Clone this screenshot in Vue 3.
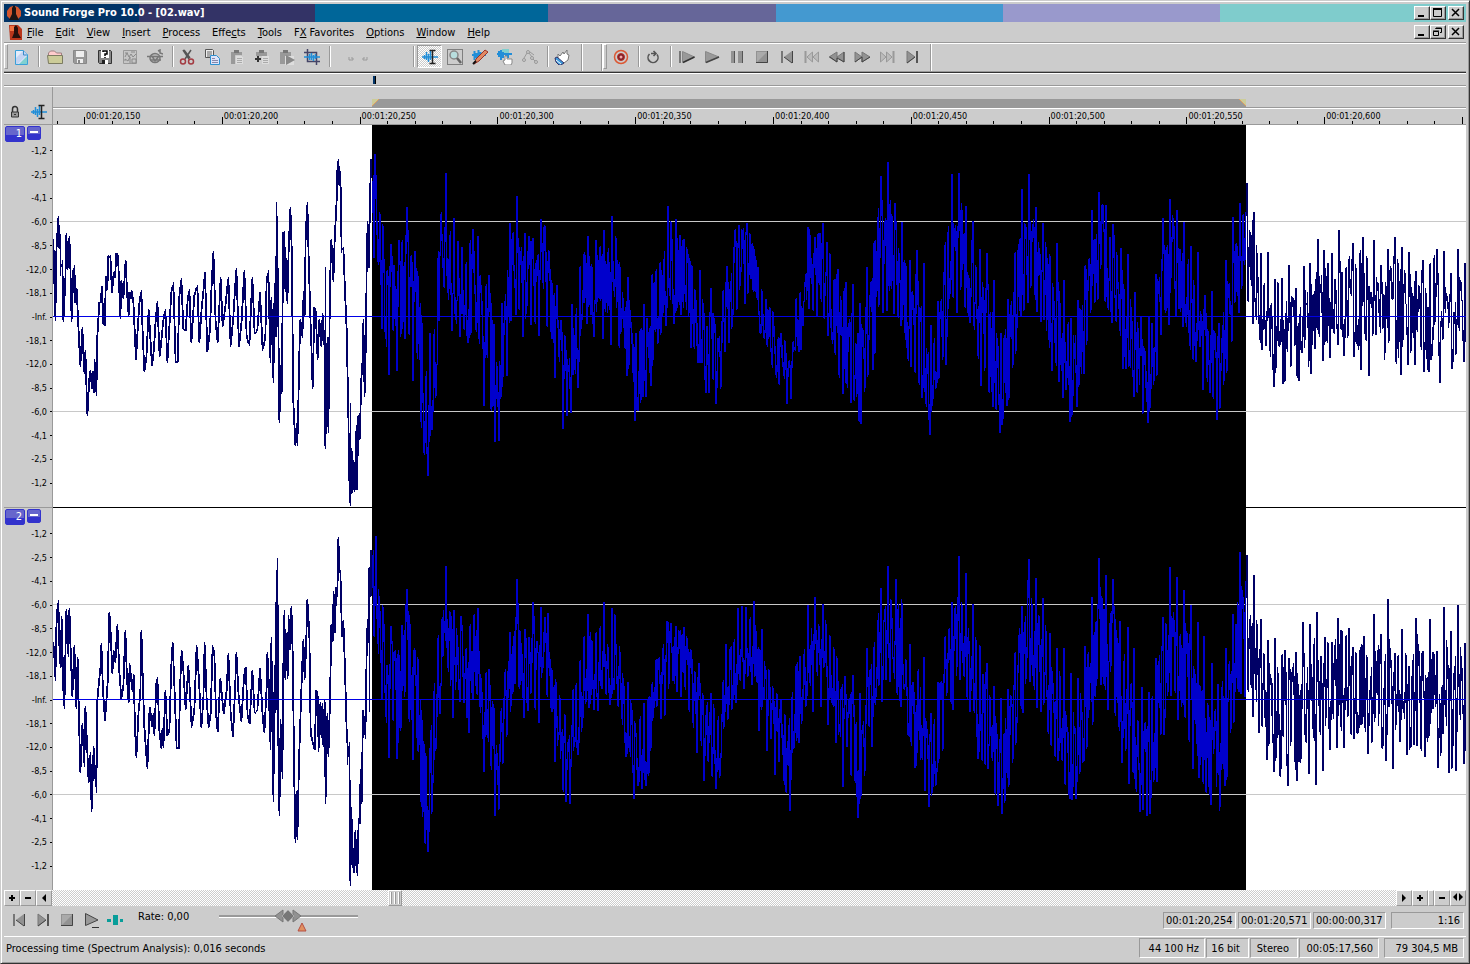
<script setup>
import { ref } from 'vue'

const menus = [
  ['', 'F', 'ile'], ['', 'E', 'dit'], ['', 'V', 'iew'], ['', 'I', 'nsert'], ['', 'P', 'rocess'],
  ['Effe', 'c', 'ts'], ['', 'T', 'ools'], ['F', 'X', ' Favorites'], ['', 'O', 'ptions'], ['', 'W', 'indow'], ['', 'H', 'elp']
]

const icon = {
  new: '<path d="M2.500 1.500h8l4 4v10h-12z" fill="#e4ecfa" stroke="#3aa0d8"/><path d="M3 9l7-7h1l3 3v1l-9 9H3z" fill="#c3d4f2"/><path d="M6 15l8-8v8z" fill="#7fd0d0"/><path d="M10.500 2v4H14" fill="none" stroke="#3a8cc8"/>',
  open: '<path d="M1.500 14V4l2-2h4l2 2h5v3" fill="#ffcccc" stroke="#a08080"/><path d="M.5 6.500h15v8h-14z" fill="#cccc99" stroke="#7c7c62"/>',
  save: '<path d="M1.500 1.500h12l1 1v12h-12l-1-1z" fill="#999" stroke="#888"/><path d="M4 2h8v6H4zM5 10h6v4H5z" fill="#eee"/><path d="M6 11h2v3H6z" fill="#888"/>',
  saveAs: '<path d="M1.500 1.500h12l1 1v12h-12l-1-1z" fill="#888" stroke="#333"/><path d="M4 1h8v8H4zM5 11h6v4H5z" fill="#fff"/><path d="M6 3V2h4v3H8v2M8 8v1" fill="none" stroke="#000" stroke-width="1.500"/><path d="M5 11h3v4H5z" fill="#222"/>',
  render: '<path d="M1.500 1.500h13v13h-13z" fill="#c6c6c6" stroke="#999"/><path d="M3 8l2-4 2 4 2-3 2 3 3-3M3 12v-2l3 2 2-4v6M10 14v-4h4v4zM3 4h3M9 3h4" fill="none" stroke="#8a8a8a"/>',
  publish: '<ellipse cx="8" cy="9" rx="5" ry="4.500" fill="#bbb" stroke="#777" stroke-width="1.500"/><path d="M0 7.500h16M3 11h11M11 2l2-1v3l3 1M5 7l3 5 4-5" fill="none" stroke="#777" stroke-width="1.500"/>',
  cut: '<path d="M4 1l6 9M12 1L6 10M5 1l6 8" fill="none" stroke="#555" stroke-width="1.500"/><circle cx="4" cy="12.500" r="2.500" fill="none" stroke="#a33b42" stroke-width="1.500"/><circle cx="12" cy="12.500" r="2.500" fill="none" stroke="#a33b42" stroke-width="1.500"/>',
  copy: '<path d="M1.500.5h7l1 1v7h-8z" fill="#eee" stroke="#555"/><path d="M3 3h5M3 5h5M3 7h3" stroke="#666"/><path d="M6.500 6.500h6l3 3v6h-9z" fill="#dde4fa" stroke="#2f90d0"/><path d="M8 9.500h3M8 11.500h6M8 13.500h6" stroke="#88a"/>',
  paste: '<path d="M2 3h11v12H2z" fill="#999"/><path d="M5 1h5v3H5z" fill="#777"/><path d="M6.500 6.500h6l2 2v7h-8z" fill="#ddd" stroke="#ccc"/><path d="M8 9.500h5M8 11.500h5M8 13.500h5" stroke="#aaa"/>',
  mix: '<path d="M2 3h11v10H2z" fill="#999"/><path d="M5 1h5v3H5z" fill="#777"/><path d="M8 7h7v8H8z" fill="#ddd"/><path d="M9 9.500h5M9 11.500h5M9 13.500h5" stroke="#aaa"/><path d="M0 7h8v6H0z" fill="#ccc"/><path d="M1 10h6M4 7v6" stroke="#333" stroke-width="2"/>',
  pastePlay: '<path d="M1 3h11v12H1z" fill="#999"/><path d="M4 1h5v3H4z" fill="#777"/><path d="M6 7h9v9H6z" fill="#ddd"/><path d="M7 6l9 5-9 5z" fill="#888"/>',
  crop: '<path d="M3.500 0v12.500H16M0 3.500h12.500V16" fill="none" stroke="#446" stroke-width="1.500"/><path d="M0 8h16M5.500 5v6M7.500 4v7M9.500 6v6M11.500 5v5" stroke="#218ed8" stroke-width="1.500"/>',
  edit: '<path d="M0 8h16M2.500 6v4M4.500 3v8M6.500 5v8M8.500 2v9" stroke="#218ed8" stroke-width="1.500"/><path d="M7.500 1.500h6M7.500 14.500h6M10.500 1.500v13" stroke="#222" stroke-width="1.500"/>',
  zoom: '<path d="M.5.5h15v15H.5z" fill="none" stroke="#333" stroke-dasharray="1 1"/><circle cx="7" cy="6" r="4" fill="#b8dede" stroke="#888" stroke-width="1.500"/><path d="M10 9l4 5" stroke="#666" stroke-width="2.500"/>',
  pencil: '<path d="M0 6h14M2.500 2v9M4.500 4v5M6.500 1v9M8.500 3v7" stroke="#218ed8" stroke-width="2"/><path d="M2 15l2-5 9-9 3 2-9 9z" fill="#e08a65" stroke="#9b3328"/><path d="M1 15l3-3" stroke="#111" stroke-width="2"/>',
  event: '<path d="M5 0h7v6H5z" fill="#7fcfcf"/><path d="M0 5h15M2 2v6M4 1v10M6 3v6M9 5v4M11 4v5" stroke="#218ed8" stroke-width="2"/><path d="M8 16l-2-4 2-1V7h2v3h5v4l-1 2z" fill="#fff" stroke="#888"/>',
  envelope: '<g fill="none" stroke="#999"><circle cx="2" cy="11" r="1.500"/><circle cx="6" cy="3" r="1.500"/><circle cx="10" cy="9" r="1.500"/><circle cx="14" cy="13" r="1.500"/><path d="M2 9l3-5M7 4l3 4M11 10l2 2M8 3l4 3"/></g>',
  hand: '<path d="M4 9V5l2 2 3-4 1 2 3-4v4l2 1-1 5-4 3H6z" fill="#fff" stroke="#777"/><path d="M1 9l2-1 7 6-3 2H5L2 13z" fill="#3e9adc" stroke="#336"/><path d="M2 11l5 4" stroke="#fff"/>',
  record: '<circle cx="8" cy="8" r="6.500" fill="none" stroke="#dc5833" stroke-width="1.500"/><circle cx="8" cy="8" r="3.500" fill="#7e2028" stroke="#b82f25"/><circle cx="8" cy="8" r="1.500" fill="#f5a6a6"/>',
  loop: '<path d="M4.500 5A5 5 0 1 0 12 5.500M6 4.500h5M8.500 2l2.500 2.500L8.500 7" fill="none" stroke="#555" stroke-width="1.600"/>',
  playAll: '<path d="M1 2v12" stroke="#777" stroke-width="2"/><path d="M3.500 2.500l12 5.500-12 5.500z" fill="#999" stroke="#888"/><path d="M4 13.500L15.500 8" stroke="#333" stroke-width="1.500"/>',
  play: '<path d="M1.500 2.500L15 8 1.500 13.500z" fill="#999" stroke="#888"/><path d="M2 13.500L15 8" stroke="#444" stroke-width="1.500"/>',
  pause: '<path d="M2 2h4v12H2zM9 2h5v12H9z" fill="#929292"/><path d="M5.500 2v12M13.500 2v12" stroke="#555"/>',
  stop: '<path d="M2 2h12v12H2z" fill="#929292"/><path d="M13.500 2v11.500H2" fill="none" stroke="#444"/><path d="M3 13V3h10z" fill="#aaa"/>',
  first: '<path d="M3 2v12" stroke="#777" stroke-width="2"/><path d="M13 2v12L5 8z" fill="#929292"/><path d="M13.500 2v12M5 8l8 6" fill="none" stroke="#444"/>',
  prev: '<path d="M1.500 2v12" stroke="#999" stroke-width="2"/><path d="M8.500 3v10L3 8zM14.500 3v10L9 8z" fill="#bbb" stroke="#999"/>',
  rewind: '<path d="M8 3v10L0 8zM15 3v10L8 8z" fill="#929292" stroke="#777"/><path d="M1 8l7 5V9l7 4V3" fill="none" stroke="#444"/>',
  forward: '<path d="M1 3v10l7-5zM8 3v10l8-5z" fill="#929292" stroke="#777"/><path d="M1 13l7-5v5l8-5" fill="none" stroke="#444"/>',
  next: '<path d="M14.500 2v12" stroke="#999" stroke-width="2"/><path d="M1.500 3v10L7 8zM7.500 3v10L13 8z" fill="#bbb" stroke="#999"/>',
  last: '<path d="M13 2v12" stroke="#555" stroke-width="2"/><path d="M3 2v12l8-6z" fill="#929292" stroke="#777"/><path d="M3 14l8-6" stroke="#444"/>',
  playLine: '<path d="M2.500 1.500L15 8 2.500 13.500z" fill="#999" stroke="#444"/><path d="M9 15.500h7" stroke="#333"/>',
  scrub: '<path d="M6 3h5v10H6zM0 7h4v3H0zM13 7h3v3h-3z" fill="#089d99"/>',
  lock: '<path d="M5.500 8V5a2.500 2.500 0 0 1 5 0v3" fill="none" stroke="#333" stroke-width="1.500"/><path d="M4.500 8h7v5h-7z" fill="#999" stroke="#333"/><path d="M7 10h2v1H7z" fill="#333"/>'
}
const fileTools = [['open', 'Open'], ['save', 'Save'], ['saveAs', 'Save As'], ['render', 'Render As'], ['publish', 'Publish']]
const clipTools = [['cut', 'Cut'], ['copy', 'Copy'], ['paste', 'Paste'], ['mix', 'Mix'], ['pastePlay', 'Paste and Play'], ['crop', 'Trim']]
const editTools = [['edit', 'Edit tool'], ['zoom', 'Magnify tool'], ['pencil', 'Pencil tool'], ['event', 'Event tool'], ['envelope', 'Envelope tool']]
const transport = [['playAll', 'Play All'], ['play', 'Play'], ['pause', 'Pause'], ['stop', 'Stop'], ['first', 'Go to Start'], ['prev', 'Previous'], ['rewind', 'Rewind'], ['forward', 'Forward'], ['next', 'Next'], ['last', 'Go to End']]
const bottomTools = [['first', 'Go to Start'], ['last', 'Go to End'], ['stop', 'Stop'], ['playLine', 'Play Normal'], ['scrub', 'Scrub']]
const activeTool = ref('edit')
const rate = ref(50)

const times = ['150', '200', '250', '300', '350', '400', '450', '500', '550', '600'].map(t => '00:01:20,' + t)
const decibels = ['-1,2', '-2,5', '-4,1', '-6,0', '-8,5', '-12,0', '-18,1', '-Inf.', '-18,1', '-12,0', '-8,5', '-6,0', '-4,1', '-2,5', '-1,2']
const position = ['00:01:20,254', '00:01:20,571', '00:00:00,317']

const parse = (text, x0, sx, y0, sy) => text.trim().split(/\s+/).map(p => {
  const [x, y] = p.split(',').map(Number)
  return [x0 + x / sx, y0 + y / sy]
})

function level(list, x) {
  let i = 1
  while (i < list.length - 1 && list[i][0] < x) i++
  const [ax, ay] = list[i - 1]
  const [bx, by] = list[i]
  return bx === ax ? by : ay + (by - ay) * Math.max(0, Math.min(1, (x - ax) / (bx - ax)))
}

// One vertical bar for every column that a plain line passes through.
function lineBars(points) {
  let d = ''
  for (let x = 53; x < 372; x++) {
    const a = x - 0.4
    const b = x + 1.4
    const ys = [level(points, a), level(points, b), ...points.filter(p => p[0] >= x && p[0] <= x + 1).map(p => p[1])]
    const top = Math.round(Math.min(...ys))
    d += `M${x}.5 ${top}V${Math.max(top + 2, Math.round(Math.max(...ys)))}`
  }
  return d
}

// Dense oscillation between an upper and a lower series of extremes.
function denseBars(tops, bottoms, from, to, seed) {
  const high = new Map(tops.map(p => [Math.floor(p[0]), p[1]]))
  const low = new Map(bottoms.map(p => [Math.floor(p[0]), p[1]]))
  let state = seed
  const random = () => {
    state = (state * 1103515245 + 12345) % 2147483648
    return state / 2147483648
  }
  let last = null
  let d = ''
  for (let x = from; x < to; x++) {
    const u = level(tops, x)
    const l = level(bottoms, x)
    const r = random()
    const f = x % 2 ? 0.12 + r * 0.35 : 0.88 - r * 0.35
    const y = high.get(x) ?? low.get(x) ?? u + (l - u) * f
    if (last === null) last = y + 20
    const reach = (l - u) * 0.2
    const a = Math.min(y, last)
    const b = Math.max(y, last)
    const top = Math.round(Math.min(a, Math.max(u, a - random() * reach)))
    const bottom = Math.round(Math.max(b, Math.min(l, b + random() * reach)))
    d += `M${x}.5 ${top}V${Math.max(bottom, top + 2)}`
    last = y
  }
  return d
}

const left1 = parse(`160,357 163,485 166,604 169,397 175,288 178,388 181,343 182,467 187,420 190,605 196,485 199,340 203,450 206,408 208,347 211,440 215,605 220,450 223,435 226,550 230,505 234,597 241,740 247,622 250,697 253,762 256,690 262,887 268,777 271,750 276,807 279,752 282,820 284,717 289,827 292,650 298,545 302,548 306,497 310,612 314,617 318,467 322,510 325,408 331,405 336,520 341,457 345,475 349,399 354,405 361,597 364,480 370,537 377,420 381,515 386,588 388,515 392,538 395,510 400,545 408,720 413,628 418,550 424,510 428,640 433,755 439,715 446,567 456,738 462,685 466,615 472,543 479,712 490,600 496,567 502,728 508,622 514,517 520,487 527,730 533,725 538,530 544,475 550,627 557,632 563,540 568,507 574,670 583,527 592,495 598,668 605,565 610,515 615,457 622,697 630,630 634,515 640,393 647,610 653,668 658,560 662,472 668,622 676,560 685,471 692,680 700,590 709,445 717,680 725,600 733,450 740,650 748,677 757,471 764,643 772,630 780,517 788,692 796,650 800,480 805,450 811,728 814,532 820,788 824,490 828,650 830,247 835,600 838,910 842,735 845,822 850,335 853,333 856,515 859,415 862,552 866,388 871,261 875,385 880,845 886,977 890,910 892,977 895,850 898,700 901,597 907,655 911,513 914,590 917,345 922,247 926,415 931,590 934,672 938,808 943,560 947,575 953,720 958,598 964,682 968,580 974,690 976,440 976,988 982,650 985,940 990,490 994,357 1000,485 1004,360 1010,240 1012,152 1015,117 1018,197 1021,152 1025,400 1030,380 1035,515 1040,630 1045,880 1048,1100 1051,850 1051,1157 1055,985 1058,1120 1061,1020 1064,1115 1069,915 1071,1110 1075,885 1079,960 1084,775 1087,740 1090,597 1094,832 1098,640 1100,437 1103,303 1107,443 1110,220 1114,117`, 0, 3, 120, 3)

const left2 = parse(`160,425 163,470 166,542 169,385 173,312 175,300 178,435 182,505 185,348 190,570 193,627 197,423 199,327 205,472 208,324 212,450 217,592 223,435 229,628 233,470 237,662 241,820 247,670 253,800 256,618 262,755 266,850 271,757 275,935 281,738 285,820 289,880 292,600 298,535 302,495 304,430 309,575 315,662 320,590 323,545 328,336 332,400 337,523 341,450 346,490 352,372 358,515 364,597 370,560 376,390 381,540 386,608 389,488 394,545 398,575 401,523 405,685 409,773 416,630 421,580 424,390 429,560 433,680 442,808 448,640 450,620 456,680 460,640 463,708 469,550 472,531 478,690 484,748 487,685 490,745 496,570 502,707 508,695 514,495 518,426 524,580 530,745 536,748 541,540 545,450 550,510 557,630 565,495 570,580 575,683 583,630 590,435 596,525 604,683 610,600 614,426 620,600 626,683 632,640 638,435 643,460 648,640 653,697 661,535 671,643 680,570 685,460 692,640 699,710 706,545 709,457 716,590 724,667 732,530 737,500 743,650 749,673 757,510 764,640 772,632 780,505 788,650 793,700 800,560 802,457 806,540 811,750 814,411 818,768 820,905 824,495 827,640 829,317 832,174 836,878 838,948 842,657 847,838 851,400 853,330 856,540 860,400 863,538 866,345 870,450 874,318 878,460 883,850 886,1028 889,873 892,1020 897,785 903,600 908,460 910,418 914,540 918,450 922,297 928,400 932,700 940,735 944,750 949,570 953,590 956,755 961,605 964,713 967,608 970,742 974,600 977,913 982,640 985,770 990,600 994,372 998,425 1001,272 1005,400 1008,262 1012,290 1015,111 1018,210 1021,210 1026,410 1030,360 1035,510 1040,695 1045,770 1048,1142 1048,726 1051,1157 1054,920 1058,1105 1060,1045 1062,1120 1066,990 1069,1095 1072,1127 1076,955 1079,972 1082,808 1085,912 1089,630 1093,670 1096,717 1100,455 1103,357 1105,430 1108,637 1108,200 1112,292 1114,150`, 0, 3, 500, 3)

const midTops1 = [
  ...parse(`7,183 14,101 28,282 38,318 49,465 61,372 71,441 85,360 95,366 109,261 120,408 132,393 143,467 155,610 166,773 179,640 191,642 202,413 212,282 226,159 237,345 250,294 261,363 274,381 286,438 298,369 307,327 322,348 332,495 346,498 355,465 369,612 380,753 394,549 403,543 417,309 428,345 440,228 450,393 463,339 475,348 487,354 498,420 511,297 523,318 535,393 545,490 559,495 570,600 583,648 594,738 605,552 616,585 629,440 641,402 653,348 665,447 677,360 689,384 701,330 711,396 725,288 737,354 749,441 758,537 773,471 782,606 796,640 809,633 820,552 830,603 844,465 855,453 868,429 880,417 892,258 901,306 916,297 927,345 940,357 950,387 964,438 974,513 988,450 997,549 1010,630 1021,504 1034,612 1045,657 1058,513 1069,438 1081,483 1093,330 1104,315 1116,330 1129,309 1139,342 1151,387 1162,441 1174,513 1185,537 1198,564 1208,576 1221,657 1232,639 1243,663 1255,730 1268,666 1276,537 1288,519 1303,486`, 370, 3, 120, 3),
  ...parse(`22,321 43,351 53,342 67,309 78,366 88,402 100,483 111,447 122,546 135,486 145,621 156,492 166,690 178,549 188,642 199,441 211,490 221,369 232,291 241,168 253,315 262,126 274,297 284,249 296,411 305,306 316,441 328,420 338,537 349,390 360,564 370,429 380,711 391,615 400,675 412,543 422,543 433,375 443,336 453,162 463,345 475,159 485,270 496,258 505,477 517,303 526,450 538,387 548,510 559,399 569,585 580,480 590,654 601,639 611,657 622,537 632,558 643,399 653,390 664,207 674,327 685,162 696,312 706,261 716,393 727,309 737,381 749,408 758,513 770,369 779,555 791,480 801,612 811,594 823,672 833,540 844,573 853,438 865,417 875,270 886,366 896,216 908,255 917,255 928,360 938,312 950,405 961,384 971,518 981,402 992,567 1003,516 1013,627 1022,590 1034,702 1045,590 1055,612 1066,462 1076,490 1087,294 1097,396 1108,237 1118,297 1129,270 1139,393 1150,306 1161,432 1171,378 1181,507 1191,396 1201,594 1213,525 1223,633 1233,513 1243,645 1255,609 1267,615 1275,420 1286,504 1297,291 1307,381 1318,249 1327,285 1337,276`, 800, 3, 120, 3)
]
const midBottoms1 = [
  ...parse(`10,413 22,425 34,627 45,657 56,765 67,617 80,753 91,640 104,657 115,640 127,783 138,700 151,905 161,998 172,1067 183,930 196,827 206,603 219,500 231,520 244,632 255,600 268,650 280,624 292,668 302,640 316,630 326,657 340,857 350,700 362,866 374,965 386,963 398,770 410,767 421,603 435,585 446,563 458,651 467,580 481,615 493,605 505,647 516,490 529,617 541,635 553,773 565,705 577,927 588,887 600,880 612,750 622,803 635,600 648,613 660,585 671,650 685,525 697,657 708,550 721,674 729,513 745,677 756,720 769,767 781,720 793,903 803,873 816,830 825,830 840,797 848,720 862,668 872,640 885,617 898,525 910,612 920,563 932,585 945,545 961,683 970,680 983,728 994,728 1005,820 1016,818 1028,770 1037,852 1052,801 1062,696 1075,668 1085,620 1099,567 1109,495 1122,551 1132,518 1146,510 1158,533 1168,640 1180,653 1190,675 1203,735 1215,765 1222,806 1240,765 1250,851 1261,837 1272,690 1285,697 1291,690`, 370, 3, 120, 3),
  ...parse(`12,573 26,567 38,570 48,588 61,533 71,593 83,648 93,660 104,700 115,765 127,821 138,791 151,850 161,837 175,903 181,911 194,803 203,765 217,750 223,700 235,549 247,579 260,573 271,490 281,582 292,588 302,617 312,640 322,717 332,741 344,755 356,790 365,833 377,851 387,944 395,857 406,803 416,773 428,708 436,735 448,520 458,530 470,580 482,497 494,560 502,580 509,608 520,617 533,708 542,797 554,743 566,815 576,860 587,867 598,938 605,914 618,857 626,833 637,735 647,692 660,588 670,570 681,549 692,495 702,525 710,575 722,605 731,600 744,660 755,753 765,730 776,785 787,833 797,803 809,905 815,884 828,860 836,795 850,762 859,663 871,570 884,545 893,537 901,435 914,543 922,563 935,608 947,602 958,633 967,747 977,747 989,735 999,831 1010,812 1020,893 1028,877 1042,908 1049,863 1061,783 1070,765 1082,645 1092,570 1106,615 1112,473 1126,588 1136,563 1148,620 1155,608 1167,677 1176,717 1187,725 1198,675 1208,809 1218,773 1229,818 1238,831 1250,899 1259,863 1271,783 1280,753 1294,663 1304,543 1316,580 1324,497 1336,490`, 800, 3, 120, 3)
]
const midTops2 = parse(`4,165 9,107 15,288 23,320 30,497 37,377 44,452 57,375 65,266 71,372 79,450 85,478 92,660 99,777 107,690 113,573 120,413 127,357 135,197 141,338 149,330 155,405 162,348 170,456 177,377 184,345 192,324 197,535 206,518 212,507 220,624 226,765 233,632 240,516 248,395 255,407 261,237 267,393 275,387 283,417 290,307 297,432 304,320 311,351 317,338 324,510 331,545 338,593 346,645 353,720 360,570 366,555 374,483 381,410 388,342 395,426 402,399 409,384 416,305 423,447 430,324 436,345 445,455 450,535 459,546 464,608 472,668 480,657 487,610 494,597 502,552 508,480 514,474 521,444 529,363 536,369 544,378 550,393 558,381 564,413 571,450 578,520 585,490 592,585 599,615 606,578 613,624 619,663 628,545 634,432 642,441 648,426 655,324 662,318 670,320 676,360 683,303 690,455 697,387 703,497 711,510 717,563 725,582 731,597 738,645 745,675 751,590 758,497 765,468 772,462 780,315 792,291 799,381 806,312 812,372 819,407 826,447 832,474 838,567 846,528 852,603 859,525 865,682 872,578 878,680 885,444 891,507 897,440 904,360 910,264 917,338 922,197 928,303 936,237 948,309 954,490 961,432 966,550 975,513 986,471 991,700 998,640 1004,677 1011,545 1017,545 1024,411 1030,387 1036,305 1042,330 1048,167 1054,330 1061,219 1067,430 1073,312 1079,420 1086,438 1091,530 1098,489 1104,597 1111,558 1117,708 1123,593 1129,705 1136,567 1142,590 1149,459 1155,405 1161,318 1166,372 1173,177 1179,320 1186,234 1191,360 1198,294 1204,393 1211,399 1217,550 1223,444 1229,530 1236,443 1242,682 1248,520 1255,690 1261,534 1267,600 1273,438 1279,468 1286,290 1293,378 1298,174 1304,297 1311,225 1317,372 1323,237 1329,393 1336,363 1342,485 1349,381 1355,573 1361,443 1367,665 1374,561 1380,683 1387,576 1393,597 1399,474 1405,483 1412,351 1418,375 1424,201 1430,353 1437,231 1443,411 1449,270 1455,410 1462,315 1467,513 1474,366 1479,560 1486,408 1492,627 1499,489 1505,640 1511,551 1517,563 1524,444 1530,501 1537,342 1543,381 1549,156 1555,297 1560,243`, 370, 1.782, 500, 3)
const midBottoms2 = parse(`6,408 13,432 20,597 27,650 33,773 40,645 47,777 54,685 62,570 69,657 76,780 82,713 90,905 97,1028 103,1055 109,937 116,747 123,642 130,467 138,505 147,653 153,543 160,605 167,608 175,698 182,597 190,580 195,620 203,815 209,705 215,797 222,947 229,928 237,790 244,705 251,617 258,552 265,560 273,653 280,633 286,573 293,623 300,670 306,513 314,585 322,623 329,785 335,720 343,870 349,905 356,911 363,740 370,765 377,683 384,603 390,623 398,630 405,632 412,562 420,583 427,615 434,563 441,617 448,657 455,770 462,755 469,896 476,857 484,867 491,857 497,818 504,653 511,615 518,656 525,645 532,553 539,540 547,575 553,592 560,560 567,630 574,670 581,758 589,720 595,842 601,777 609,827 616,867 623,827 630,680 637,657 644,627 651,608 658,537 666,567 673,525 679,555 686,525 693,692 701,590 707,753 714,710 721,825 728,780 736,842 741,875 748,933 755,743 763,728 769,663 776,617 783,543 789,635 795,510 803,620 809,500 815,675 822,603 829,728 836,695 842,860 850,740 856,825 863,842 869,953 874,887 882,812 888,665 894,742 901,590 906,551 912,605 918,537 925,545 932,520 938,580 945,620 951,563 958,705 963,725 970,803 976,800 983,768 989,873 995,922 1001,880 1008,855 1013,776 1021,747 1027,573 1038,630 1046,500 1051,540 1058,525 1063,590 1069,635 1076,633 1083,777 1089,780 1095,792 1100,806 1107,773 1113,880 1119,917 1125,942 1131,902 1138,855 1145,777 1150,728 1156,608 1163,640 1168,537 1175,545 1182,557 1188,623 1195,635 1201,608 1207,695 1213,735 1220,768 1225,783 1233,780 1238,851 1246,897 1250,899 1258,897 1264,815 1271,783 1277,740 1288,665 1295,535 1301,555 1309,558 1314,630 1320,485 1326,640 1334,680 1340,790 1347,743 1351,851 1359,810 1364,867 1371,935 1377,928 1384,947 1389,942 1396,837 1401,846 1408,700 1414,705 1421,573 1427,587 1434,570 1439,660 1448,605 1452,650 1459,720 1465,806 1472,732 1477,833 1483,845 1489,875 1497,915 1503,740 1510,972 1514,920 1522,857 1527,830 1534,687 1539,665 1547,573 1551,582 1558,590`, 370, 1.782, 500, 3)
const endTops1 = parse(`49,127 58,227 70,185 80,268 91,267 100,340 112,265 121,378 133,320 143,328 154,317 165,388 176,291 187,362 197,338 208,395 219,294 228,367 239,287 250,355 261,239 270,330 281,261 292,291 303,267 313,320 325,221 334,308 346,298 355,279 367,247 377,300 388,267 398,235 409,277 421,350 430,241 440,330 451,291 460,353 472,259 482,303 493,235 503,291 514,255 524,311 535,265 545,353 556,303 566,340 577,281 587,353 599,289 609,277 619,259 630,405 641,263 650,353 661,308 672,385 682,259 692,330 703,287`, 1230, 3, 120, 2.01)
const endBottoms1 = parse(`53,363 67,411 76,393 88,442 95,463 107,453 117,465 130,536 137,498 148,453 157,530 163,525 175,500 181,495 193,450 199,515 205,525 214,465 229,487 241,511 252,460 265,427 277,485 289,440 299,479 311,427 322,453 331,415 341,475 352,435 362,345 370,477 382,452 391,502 406,437 416,515 427,430 436,433 448,415 460,490 475,445 485,350 496,486 511,512 523,432 532,493 542,461 553,493 565,430 580,506 595,507 605,475 614,402 628,528 638,440 650,405 664,500 676,470 685,415 700,487 706,437`, 1230, 3, 120, 2.01)
const endTops2 = parse(`49,874 58,1012 70,915 80,1013 91,1003 100,1080 112,1045 122,1130 133,1041 143,1115 154,1075 164,1065 175,1082 186,1100 197,1070 208,1160 217,1009 228,1132 239,1013 250,1057 259,989 271,1086 283,1039 292,1051 303,1049 313,1055 322,1001 334,1027 346,1039 355,1021 366,1059 377,1071 388,1065 399,1037 409,1080 420,1118 430,993 441,1065 451,1033 463,1091 472,963 482,1086 493,1071 503,1080 514,1023 526,1075 535,1101 546,1086 556,1001 566,1067 577,1067 587,1125 598,1003 610,1075 619,1067 629,1175 641,979 650,1063 661,1027 672,1098 682,975 692,1080 703,1051`, 1230, 3, 120, 2.01)
const endBottoms2 = parse(`53,1145 67,1200 75,1145 86,1233 95,1215 108,1287 116,1250 129,1310 137,1280 149,1318 163,1358 171,1338 181,1250 192,1290 199,1328 212,1285 225,1250 235,1315 247,1215 256,1336 268,1220 277,1308 287,1195 298,1267 307,1190 318,1263 330,1220 340,1263 352,1195 362,1235 370,1245 382,1233 391,1215 404,1223 412,1275 424,1250 434,1200 442,1213 455,1263 467,1288 476,1170 488,1305 497,1213 509,1251 520,1185 530,1277 539,1263 551,1255 560,1258 571,1265 582,1280 595,1238 608,1175 622,1302 632,1272 645,1200 656,1312 665,1302 676,1308 688,1185 699,1295 706,1265`, 1230, 3, 120, 2.01)

const plain = lineBars(left1) + lineBars(left2) + denseBars(endTops1, endBottoms1, 1246, 1466, 7) + denseBars(endTops2, endBottoms2, 1246, 1466, 19)
const selected = denseBars(midTops1, midBottoms1, 372, 1246, 3) + denseBars(midTops2, midBottoms2, 372, 1246, 11)
</script>

<template>
  <div class="window">
    <header class="titlebar">
      <svg class="logo" viewBox="0 0 16 16"><path d="M4 2l3-1v13H4L1 11V6zM12 2L9 1v13h3l3-3V6z" fill="#d4552c" /><path d="M6 3l2-3 2 3v6l3 6H3l3-6z" fill="#1c1414" /></svg>
      <h1>Sound Forge Pro 10.0 - [02.wav]</h1>
      <div class="controls">
        <button aria-label="Minimize"><svg viewBox="0 0 12 10"><path d="M2 8h6" stroke="#000" stroke-width="2" /></svg></button>
        <button aria-label="Maximize"><svg viewBox="0 0 12 10"><path d="M1.500 1v7.500h8V1M1 1h9" fill="none" stroke="#000" /><path d="M1 1h9" stroke="#000" stroke-width="2" /></svg></button>
        <button class="close" aria-label="Close"><svg viewBox="0 0 12 10"><path d="M2 1l7 7M9 1L2 8" stroke="#000" stroke-width="1.500" /></svg></button>
      </div>
    </header>

    <nav class="menubar">
      <svg class="doc-logo" viewBox="0 0 14 16"><path d="M0 1h9l4 4v11H1z" fill="#b8361c" /><path d="M1 2h5v5H1z" fill="#ef7040" /><path d="M5 3l2-2 2 3v5l3 5H3l2-5z" fill="#25100d" /></svg>
      <a v-for="m in menus" :key="m.join('')" href="#">{{ m[0] }}<u>{{ m[1] }}</u>{{ m[2] }}</a>
      <div class="controls">
        <button aria-label="Minimize document"><svg viewBox="0 0 12 10"><path d="M2 8h6" stroke="#000" stroke-width="2" /></svg></button>
        <button aria-label="Restore document"><svg viewBox="0 0 12 10"><path d="M4 2V1h5.500v4.500H8M3.500 1.500h6M1.500 4.500h5v4h-5zM1 4h6" fill="none" stroke="#000" /></svg></button>
        <button class="close" aria-label="Close document"><svg viewBox="0 0 12 10"><path d="M2 1l7 7M9 1L2 8" stroke="#000" stroke-width="1.500" /></svg></button>
      </div>
    </nav>

    <div class="toolbars">
      <div class="toolbar main-tools">
        <i class="grip"></i>
        <button class="tool" aria-label="New"><svg viewBox="0 0 16 16" v-html="icon.new"></svg></button>
        <i class="sep"></i>
        <button v-for="t in fileTools" :key="t[0]" class="tool" :aria-label="t[1]"><svg viewBox="0 0 16 16" v-html="icon[t[0]]"></svg></button>
        <i class="sep tight"></i>
        <button v-for="t in clipTools" :key="t[0]" class="tool" :aria-label="t[1]"><svg viewBox="0 0 16 16" v-html="icon[t[0]]"></svg></button>
        <i class="sep"></i>
        <div class="history">
          <button aria-label="Undo"><svg viewBox="0 0 6 6"><path d="M1 1v3h4V2H3" fill="none" stroke="#999" /></svg></button>
          <button aria-label="Redo"><svg viewBox="0 0 6 6"><path d="M5 1v3H1V2h2" fill="none" stroke="#999" /></svg></button>
        </div>
        <i class="sep"></i>
        <button v-for="t in editTools" :key="t[0]" class="tool" :class="{ active: activeTool === t[0] }" :aria-label="t[1]" @click="activeTool = t[0]"><svg viewBox="0 0 16 16" v-html="icon[t[0]]"></svg></button>
        <i class="sep tight"></i>
        <button class="tool" aria-label="What's this"><svg viewBox="0 0 16 16" v-html="icon.hand"></svg></button>
      </div>
      <div class="toolbar transport-tools">
        <i class="grip"></i>
        <button class="tool" aria-label="Record"><svg viewBox="0 0 16 16" v-html="icon.record"></svg></button>
        <i class="sep tight"></i>
        <button class="tool" aria-label="Loop playback"><svg viewBox="0 0 16 16" v-html="icon.loop"></svg></button>
        <i class="sep"></i>
        <button v-for="t in transport" :key="t[0]" class="tool" :aria-label="t[1]"><svg viewBox="0 0 16 16" v-html="icon[t[0]]"></svg></button>
      </div>
    </div>

    <div class="overview"><i class="view-mark"></i></div>

    <main class="editor">
      <div class="corner">
        <button aria-label="Lock"><svg viewBox="0 0 16 16" v-html="icon.lock"></svg></button>
        <button aria-label="Edit tool"><svg viewBox="0 0 16 16" v-html="icon.edit"></svg></button>
      </div>
      <div class="rulers">
        <div class="loopbar">
          <div class="loop-region">
            <svg viewBox="0 0 7 7"><path d="M0 0h7L0 7z" fill="#cccc99" /><path d="M7 0L0 7" stroke="#e0a060" /></svg>
            <svg viewBox="0 0 7 7"><path d="M0 0h7v7z" fill="#cccc99" /><path d="M0 0l7 7" stroke="#e0a060" /></svg>
          </div>
        </div>
        <div class="ruler">
          <div class="lead"><i></i></div>
          <div v-for="t in times" :key="t" class="division">
            <span>{{ t }}</span>
            <div class="ticks"><i v-for="n in 5" :key="n"></i></div>
          </div>
          <div class="tail"></div>
        </div>
      </div>

      <div class="gutter">
        <section v-for="c in 2" :key="c" class="channel">
          <div class="channel-buttons">
            <button class="number">{{ c }}</button>
            <button class="minimize" aria-label="Minimize channel"></button>
          </div>
          <ol class="scale"><li v-for="(d, i) in decibels" :key="i">{{ d }}</li></ol>
        </section>
      </div>
      <svg class="waves" viewBox="53 125 1413 765" preserveAspectRatio="none" role="img" aria-label="Stereo waveform" shape-rendering="crispEdges">
        <path d="M53 125h1413v765H53z" fill="#fff" />
        <path d="M53 507.500h1413" stroke="#000" />
        <path d="M372 125h874v765H372z" fill="#000" />
        <path d="M53 221.500h1413M53 411.500h1413M53 604.500h1413M53 794.500h1413" stroke="#c8c8c8" />
        <path :d="plain" stroke="#000066" fill="none" />
        <path :d="selected" stroke="#0000cc" fill="none" />
        <path d="M53 316.500h1413M53 699.500h1413" stroke="#0000e6" />
      </svg>
    </main>

    <div class="scrollbar">
      <button aria-label="Zoom in vertically"><svg viewBox="0 0 12 12"><path d="M3 6h6M6 3v6" stroke="#000" stroke-width="2" /></svg></button>
      <button aria-label="Zoom out vertically"><svg viewBox="0 0 12 12"><path d="M3 6h6" stroke="#000" stroke-width="2" /></svg></button>
      <button aria-label="Scroll left"><svg viewBox="0 0 12 12"><path d="M8 2v8L4 6z" /></svg></button>
      <div class="track"><div class="thumb"><i></i><i></i><i></i></div></div>
      <button aria-label="Scroll right"><svg viewBox="0 0 12 12"><path d="M4 2v8l4-4z" /></svg></button>
      <button aria-label="Zoom in"><svg viewBox="0 0 12 12"><path d="M3 6h6M6 3v6" stroke="#000" stroke-width="2" /></svg></button>
      <button class="slim" aria-label="Zoom drag"></button>
      <button aria-label="Zoom out"><svg viewBox="0 0 12 12"><path d="M3 6h6" stroke="#000" stroke-width="2" /></svg></button>
      <button aria-label="Zoom selection"><svg viewBox="0 0 12 12"><path d="M5 1v8L1 5zM7 1v8l4-4z" /></svg></button>
    </div>

    <div class="playbar">
      <button v-for="t in bottomTools" :key="t[0]" class="small-tool" :aria-label="t[1]"><svg viewBox="0 0 16 16" v-html="icon[t[0]]"></svg></button>
      <label for="rate">Rate: 0,00</label>
      <div class="slider">
        <input id="rate" v-model="rate" type="range" min="0" max="100">
        <svg viewBox="0 0 28 24"><path d="M9 1v12L1 7zM19 1v12l8-6z" fill="#929292" stroke="#777" /><path d="M14 1l6 6-6 6-6-6z" fill="#777" stroke="#aaa" /><path d="M28 14l4 8h-8z" fill="#e09060" stroke="#b54f42" /></svg>
      </div>
      <div class="readouts">
        <output v-for="p in position" :key="p">{{ p }}</output>
        <output class="ratio">1:16</output>
      </div>
    </div>

    <footer class="statusbar">
      <p>Processing time (Spectrum Analysis): 0,016 seconds</p>
      <span class="w-rate">44 100 Hz</span>
      <span class="w-bits">16 bit</span>
      <span class="w-mode">Stereo</span>
      <span class="w-length">00:05:17,560</span>
      <span class="w-disk">79 304,5 MB</span>
    </footer>
  </div>
</template>

<style>
body { background: #ccc; }
</style>

<style scoped>
* { box-sizing: border-box; }
.window {
  display: flex; flex-direction: column; min-height: 100vh; padding: 2px;
  background: #ccc; color: #000; border: solid; border-width: 1px; border-color: #ccc #333 #333 #ccc;
  box-shadow: inset 1px 1px #fff, inset -1px -1px #999;
  font: 11px/14px "DejaVu Sans Condensed", "Noto Sans", sans-serif;
}
.window > * { margin: 0 1px; }
button { padding: 0; border: 0; background: none; color: inherit; font: inherit; }
svg { display: block; }
.titlebar {
  display: flex; align-items: center; height: 18px; margin-top: 1px; padding: 0 2px;
  background: linear-gradient(90deg, #003366 9.2%, #333366 9.2% 21.3%, #006699 21.3% 37.2%, #666699 37.2% 52.8%, #4499d0 52.8% 68.3%, #9999cc 68.3% 83.2%, #7fcccc 83.2%);
}
.logo { width: 16px; height: 16px; }
h1 { margin: 0 0 0 2px; color: #fff; font-size: 11px; font-weight: bold; line-height: 16px; }
.controls { display: flex; margin-left: auto; }
.controls button { width: 16px; height: 14px; padding: 1px; background: #ccc; border: 1px solid; border-color: #fff #333 #333 #fff; box-shadow: inset -1px -1px #999; }
.controls svg { width: 12px; height: 10px; }
.controls .close { margin-left: 2px; }
.menubar { display: flex; align-items: center; gap: 12px; height: 21px; padding: 0 2px 0 5px; border-bottom: 1px solid #999; }
.doc-logo { width: 14px; height: 16px; margin-right: -8px; }
.menubar a { color: #000; line-height: 16px; padding-top: 1px; text-decoration: none; white-space: nowrap; }
.toolbars { display: flex; height: 30px; border-top: 1px solid #fff; border-bottom: 1px solid #333; box-shadow: inset 0 -1px #999; }
.toolbar { display: flex; align-items: center; height: 27px; padding-bottom: 2px; border-right: 1px solid #999; box-shadow: 1px 0 #fff; }
.main-tools { width: 578px; }
.transport-tools { width: 330px; margin-left: 19px; padding-left: 1px; border-left: 1px solid #999; box-shadow: 1px 0 #fff, inset 1px 0 #fff; }
.grip { flex: none; width: 4px; height: 25px; margin-right: 1px; border: 1px solid; border-color: #fff #999 #999 #fff; }
.main-tools .grip { margin-right: 0; }
.tool { flex: none; display: grid; place-items: center; width: 25px; height: 23px; }
.tool svg { width: 16px; height: 16px; }
.tool.active { border: 1px solid; border-color: #999 #fff #fff #999; background: repeating-conic-gradient(#ccc 0 25%, #fff 0 50%) 0 0 / 2px 2px; }
.sep { flex: none; width: 2px; height: 21px; margin: 0 2px 0 5px; border-left: 1px solid #999; border-right: 1px solid #fff; }
.sep.tight { margin-right: 0; }
.history { display: flex; gap: 8px; width: 75px; padding: 4px 0 0 15px; }
.history svg { width: 6px; height: 6px; }
.overview { height: 13px; padding: 2px 0 0 369px; border-top: 1px solid #fff; border-bottom: 1px solid #999; }
.view-mark { display: block; width: 3px; height: 8px; background: #003366; border-right: 1px solid #000; }
.editor { flex: 1; display: grid; grid-template: 38px 1fr / 49px 1fr; border-top: 1px solid #fff; min-height: 600px; }
.window > .editor, .window > .scrollbar { margin-right: 1px; }
.corner { display: flex; align-items: end; gap: 8px; padding: 0 0 4px 3px; border-right: 1px solid #999; border-bottom: 1px solid #999; }
.corner svg { width: 16px; height: 16px; }
.rulers { display: flex; flex-direction: column; }
.loopbar { height: 21px; padding-top: 12px; border-bottom: 1px solid #999; }
.loop-region { display: flex; justify-content: space-between; width: 61.86%; height: 8px; margin-left: 22.58%; background: #999; }
.loop-region svg { width: 7px; height: 7px; }
.ruler { flex: 1; display: grid; grid-template-columns: 31px repeat(10, 1fr) 4px; border-top: 1px solid #fff; border-bottom: 1px solid #999; }
.lead { display: flex; align-items: end; padding-left: 4px; }
.lead i { height: 3px; border-left: 1px solid #000; }
.division { display: flex; flex-direction: column; justify-content: space-between; }
.division span { height: 8px; padding-left: 2px; font-size: 9px; line-height: 15px; }
.ticks { display: flex; align-items: end; height: 7px; }
.ticks i { flex: 1; height: 3px; border-left: 1px solid #000; }
.ticks i:first-child { height: 7px; }
.tail { height: 7px; align-self: end; border-left: 1px solid #000; }
.gutter { display: flex; flex-direction: column; border-right: 1px solid #999; }
.channel { flex: 1; display: flex; flex-direction: column; position: relative; }
.channel + .channel { border-top: 1px solid #999; }
.channel-buttons { position: absolute; display: flex; gap: 2px; top: 1px; left: 1px; }
.channel-buttons button { border: 1px solid #3333cc; border-radius: 2px; background: linear-gradient(#6666cc 60%, #3333cc 60%); }
.number { width: 20px; height: 16px; padding-left: 8px; color: #fff; }
.minimize { width: 14px; height: 14px; }
.minimize::before { content: ""; display: block; width: 8px; height: 2px; margin: 0 auto 3px; background: #fff; }
.scale { flex: 1; display: flex; flex-direction: column; margin: 0; padding: 14px 0 12px; list-style: none; font-size: 9px; line-height: 12px; }
.scale li { flex: 1; display: flex; justify-content: flex-end; align-items: center; }
.scale li::after { content: ""; width: 2px; height: 1px; margin-left: 3px; background: #000; }
.waves { width: 100%; height: 100%; min-height: 0; }
.editor > .waves { contain: size; }
.scrollbar { display: flex; height: 16px; }
.scrollbar button { flex: none; display: grid; place-items: center; width: 16px; height: 16px; background: #ccc; border: 1px solid; border-color: #fff #999 #999 #fff; }
.scrollbar svg { width: 12px; height: 12px; }
.scrollbar .slim { width: 6px; }
.track { flex: 1; padding-left: 23%; background: repeating-conic-gradient(#ccc 0 25%, #fff 0 50%) 0 0 / 2px 2px; }
.thumb { display: flex; gap: 2px; width: 14px; height: 16px; padding: 1px; background: #ccc; border: 1px solid; border-color: #fff #999 #999 #fff; }
.thumb i { width: 2px; border-left: 1px solid #fff; border-right: 1px solid #999; }
.playbar { display: flex; height: 30px; padding: 0 2px 0 3px; }
.small-tool { width: 24px; height: 28px; display: grid; place-items: center; }
.small-tool svg { width: 16px; height: 16px; }
.playbar label { width: 81px; margin: 4px 0 0 11px; }
.slider { position: relative; width: 139px; margin-top: 2px; }
.slider input { appearance: none; display: block; width: 139px; height: 16px; margin: 0; background: linear-gradient(#999 2px, #fff 2px) 0 7px / 100% 3px no-repeat; }
.slider input::-webkit-slider-thumb { appearance: none; width: 26px; height: 14px; }
.slider svg { position: absolute; top: 1px; left: 55px; width: 28px; height: 24px; overflow: visible; pointer-events: none; }
.readouts { display: flex; gap: 2px; margin-left: auto; padding-top: 6px; }
.readouts output { width: 73px; height: 17px; padding-left: 2px; border: 1px solid; border-color: #999 #fff #fff #999; line-height: 16px; white-space: nowrap; }
.readouts .ratio { margin-left: 3px; padding-right: 3px; text-align: right; }
.statusbar { display: flex; gap: 1px; height: 25px; padding: 1px 2px 0 2px; border-top: 1px solid #fff; }
.statusbar p { flex: 1; margin: 0; line-height: 21px; }
.statusbar span { height: 20px; border: 1px solid; border-color: #999 #fff #fff #999; line-height: 19px; text-align: right; padding-right: 5px; white-space: nowrap; }
.w-rate { width: 66px; }
.w-bits { width: 43px; }
.w-mode { width: 48px; }
.statusbar .w-bits, .statusbar .w-mode { padding-right: 8px; }
.w-length { width: 80px; }
.w-disk { width: 80px; margin-left: 4px; }
</style>
